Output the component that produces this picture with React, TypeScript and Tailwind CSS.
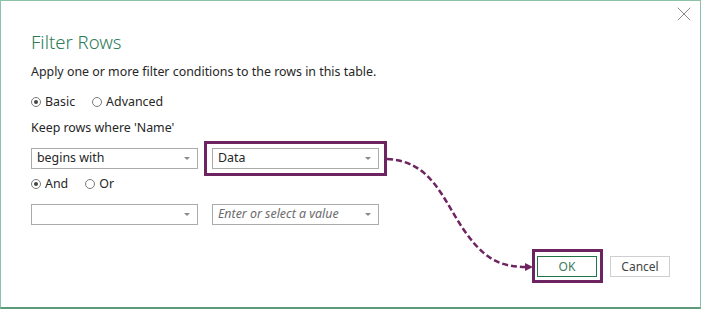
import { X } from "lucide-react";

function Radio({ checked, label }: { checked?: boolean; label: string }) {
  return (
    <label className="flex items-center gap-[4px]">
      <span className="flex h-[10px] w-[10px] items-center justify-center rounded-full border border-[#7a7a7a] bg-white">
        {checked && <span className="h-[4px] w-[4px] rounded-full bg-[#444]" />}
      </span>
      <span>{label}</span>
    </label>
  );
}

function Dropdown({
  value,
  placeholder,
}: {
  value?: string;
  placeholder?: string;
}) {
  return (
    <div className="flex h-[21px] w-[167px] items-center justify-between border border-[#ababab] bg-white pl-[5px] pr-[7px]">
      {value ? (
        <span className="text-[#262626]">{value}</span>
      ) : (
        <span className="italic text-[#6b6b6b]">{placeholder ?? ""}</span>
      )}
      <span className="h-0 w-0 border-x-[3px] border-t-[3px] border-x-transparent border-t-[#8a8a8a]" />
    </div>
  );
}

export default function App() {
  return (
    <div
      className="relative h-[309px] w-[701px] border border-b-2 border-[#8cc2a7] border-b-[#5f9a7c] bg-white text-[12.4px] text-[#262626]"
      style={{ fontFamily: '"Noto Sans", "Open Sans", sans-serif' }}
    >
      {/* Close */}
      <button className="absolute right-[4px] top-[1px] text-[#8a8a8a]">
        <X className="h-[24px] w-[24px]" strokeWidth={1} />
      </button>

      <div className="flex flex-col pl-[30px] pt-[28px]">
        <h1 className="text-[18.5px] font-light leading-[26px] text-[#2d7b58]">
          Filter Rows
        </h1>
        <p className="mt-[8px] leading-[18px]">
          Apply one or more filter conditions to the rows in this table.
        </p>

        <div className="mt-[12px] flex items-center gap-[17px] leading-[18px]">
          <Radio checked label="Basic" />
          <Radio label="Advanced" />
        </div>

        <p className="mt-[8px] leading-[18px]">Keep rows where 'Name'</p>

        <div className="mt-[11px] flex gap-[14px]">
          <Dropdown value="begins with" />
          <div className="relative">
            <div className="absolute -bottom-[7px] -left-[8px] -right-[8px] -top-[7px] border-[3px] border-[#6e2460]" />
            <Dropdown value="Data" />
          </div>
        </div>

        <div className="mt-[6px] flex items-center gap-[17px] leading-[18px]">
          <Radio checked label="And" />
          <Radio label="Or" />
        </div>

        <div className="mt-[11px] flex gap-[14px]">
          <Dropdown />
          <Dropdown placeholder="Enter or select a value" />
        </div>
      </div>

      <div className="absolute bottom-[30px] right-[30px] flex gap-[13px]">
        <div className="relative">
          <div className="absolute -bottom-[6px] -left-[5px] -right-[6px] -top-[7px] border-[3px] border-[#6e2460]" />
          <button className="h-[21px] w-[60px] border border-[#217346] bg-white text-[12px] text-[#3e7a5c]">
            OK
          </button>
        </div>
        <button className="h-[21px] w-[60px] border border-[#cfcfcf] bg-white text-[12px] text-[#444]">
          Cancel
        </button>
      </div>

      {/* connector arrow */}
      <svg
        className="pointer-events-none absolute left-0 top-0"
        width="701"
        height="309"
        viewBox="0 0 701 309"
      >
        <path
          d="M386 158 C 432 160 442 200 465 232 S 505 265 525 266"
          fill="none"
          stroke="#6e2460"
          strokeWidth="2.5"
          strokeDasharray="6 3"
        />
        <path d="M524 262 L532 266 L524 270 Z" fill="#6e2460" />
      </svg>
    </div>
  );
}
